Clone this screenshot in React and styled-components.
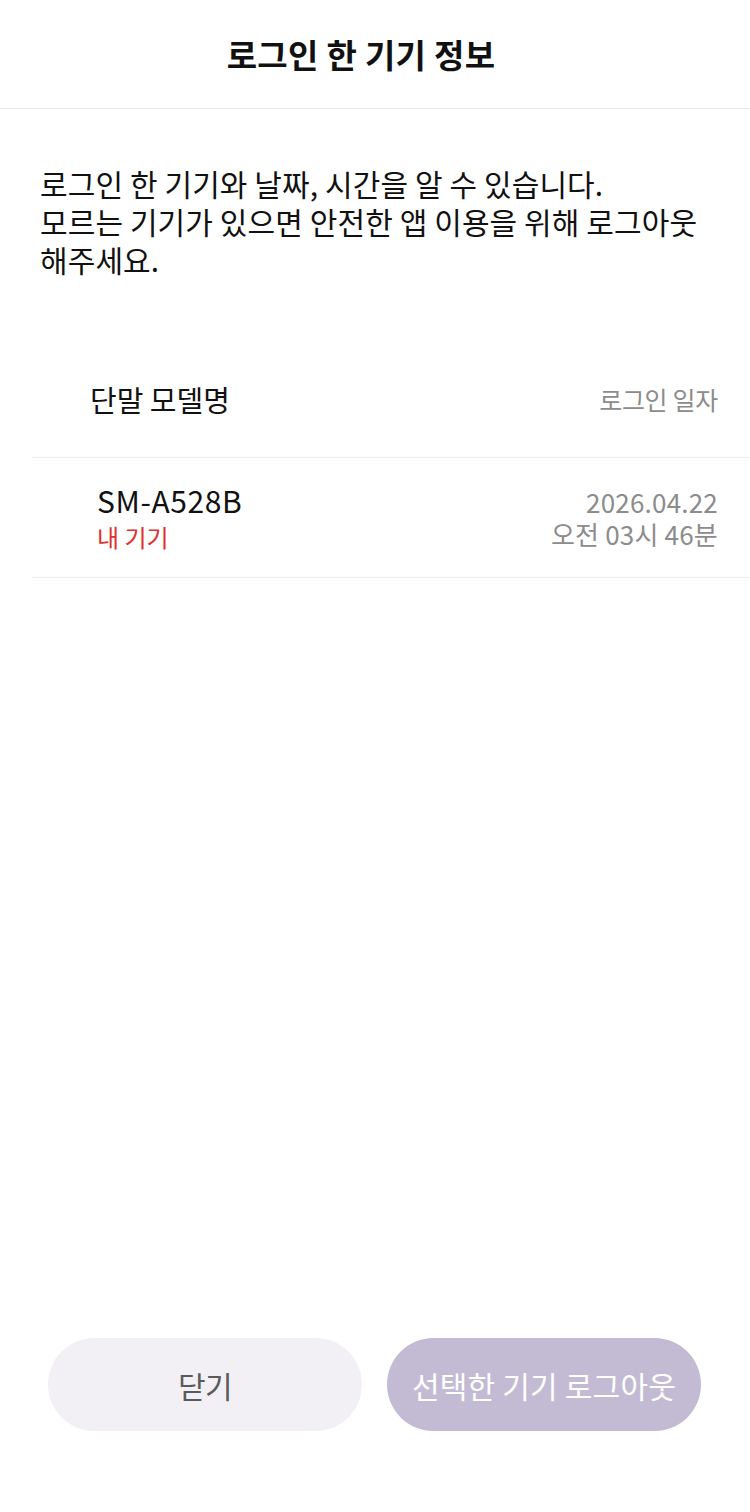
import React from "react";
import styled, { createGlobalStyle } from "styled-components";

const GlobalStyle = createGlobalStyle`
  html, body {
    margin: 0;
    padding: 0;
    background: #ffffff;
    font-family: "Noto Sans CJK KR", "Noto Sans", sans-serif;
  }
  * { box-sizing: border-box; }
`;

const Page = styled.div`
  width: 750px;
  height: 1512px;
  display: flex;
  flex-direction: column;
  background: #fff;
`;

const Header = styled.header`
  height: 109px;
  display: flex;
  align-items: center;
  justify-content: center;
  padding-right: 28px;
  border-bottom: 1px solid #e8e8e8;
`;

const Title = styled.h1`
  margin: 0;
  font-size: 33px;
  line-height: 40px;
  font-weight: 700;
  color: #111;
  letter-spacing: 0.3px;
`;

const Description = styled.p`
  margin: 0;
  padding: 55px 36px 0 40px;
  font-size: 30px;
  line-height: 38px;
  color: #111;
  letter-spacing: 0.1px;
  word-break: keep-all;
`;

const Table = styled.div`
  margin-top: 62px;
  padding-left: 32px;
`;

const Row = styled.div`
  display: flex;
  justify-content: space-between;
  align-items: center;
  height: ${(p) => p.$height}px;
  padding: 0 32px 0 ${(p) => p.$indent}px;
  border-bottom: ${(p) => (p.$line ? "1px solid #ececec" : "none")};
`;

const HeadLabel = styled.span`
  line-height: 36px;
  color: ${(p) => (p.$muted ? "#8c8c8c" : "#111")};
  font-size: ${(p) => (p.$muted ? 25 : 29)}px;
  letter-spacing: ${(p) => (p.$muted ? -0.3 : 0)}px;
`;

const Cell = styled.div`
  display: flex;
  flex-direction: column;
  gap: 1px;
  align-items: ${(p) => (p.$right ? "flex-end" : "flex-start")};
`;

const Model = styled.span`
  font-size: 30px;
  line-height: 36px;
  color: #111;
  letter-spacing: 0.6px;
`;

const Mine = styled.span`
  font-size: 24px;
  line-height: 35px;
  color: #e0302f;
`;

const DateText = styled.span`
  font-size: 26px;
  line-height: 31px;
  color: #8c8c8c;
  letter-spacing: 0.2px;
`;

const Spacer = styled.div`
  flex: 1;
`;

const Footer = styled.div`
  display: flex;
  gap: 25px;
  padding: 0 49px 81px 48px;
`;

const Button = styled.button`
  flex: 1;
  height: 93px;
  border: none;
  border-radius: 47px;
  font-family: inherit;
  font-size: 30px;
  letter-spacing: ${(p) => (p.$primary ? 0.2 : -0.5)}px;
  background: ${(p) => (p.$primary ? "#c3bbd4" : "#f2f0f5")};
  color: ${(p) => (p.$primary ? "#ffffff" : "#5a5a5a")};
`;

export default function App() {
  return (
    <>
      <GlobalStyle />
      <Page>
        <Header>
          <Title>로그인 한 기기 정보</Title>
        </Header>
        <Description>
          로그인 한 기기와 날짜, 시간을 알 수 있습니다.
          <br />
          모르는 기기가 있으면 안전한 앱 이용을 위해 로그아웃 해주세요.
        </Description>
        <Table>
          <Row $height={118} $indent={58} $line>
            <HeadLabel>단말 모델명</HeadLabel>
            <HeadLabel $muted>로그인 일자</HeadLabel>
          </Row>
          <Row $height={120} $indent={65} $line>
            <Cell>
              <Model>SM-A528B</Model>
              <Mine>내 기기</Mine>
            </Cell>
            <Cell $right>
              <DateText>2026.04.22</DateText>
              <DateText>오전 03시 46분</DateText>
            </Cell>
          </Row>
        </Table>
        <Spacer />
        <Footer>
          <Button>닫기</Button>
          <Button $primary>선택한 기기 로그아웃</Button>
        </Footer>
      </Page>
    </>
  );
}
